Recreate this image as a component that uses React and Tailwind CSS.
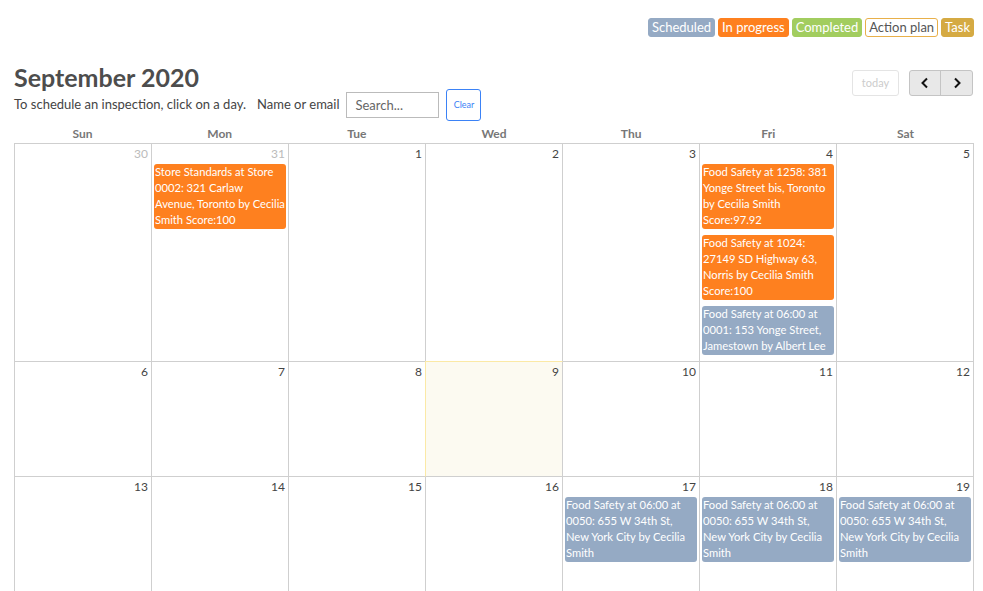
import React from "react"

const legend = [
  { label: "Scheduled", cls: "bg-[#95aac4] text-white border-[#95aac4]" },
  { label: "In progress", cls: "bg-[#fe801f] text-white border-[#fe801f]" },
  { label: "Completed", cls: "bg-[#a2cd5f] text-white border-[#a2cd5f]" },
  { label: "Action plan", cls: "bg-white text-[#555] border-[#e8b04a]" },
  { label: "Task", cls: "bg-[#d5aa43] text-white border-[#d5aa43]" },
]

const days = ["Sun", "Mon", "Tue", "Wed", "Thu", "Fri", "Sat"]

const ORANGE = "bg-[#fe801f]"
const BLUE = "bg-[#95aac4]"

const nyc = ["Food Safety at 06:00 at", "0050: 655 W 34th St,", "New York City by Cecilia", "Smith"]

const weeks = [
  {
    h: "h-[218px]",
    cells: [
      { n: 30, other: true },
      { n: 31, other: true, events: [{ c: ORANGE, t: ["Store Standards at Store", "0002: 321 Carlaw", "Avenue, Toronto by Cecilia", "Smith Score:100"] }] },
      { n: 1 },
      { n: 2 },
      { n: 3 },
      {
        n: 4,
        events: [
          { c: ORANGE, t: ["Food Safety at 1258: 381", "Yonge Street bis, Toronto", "by Cecilia Smith", "Score:97.92"] },
          { c: ORANGE, t: ["Food Safety at 1024:", "27149 SD Highway 63,", "Norris by Cecilia Smith", "Score:100"] },
          { c: BLUE, t: ["Food Safety at 06:00 at", "0001: 153 Yonge Street,", "Jamestown by Albert Lee"] },
        ],
      },
      { n: 5 },
    ],
  },
  {
    h: "h-[115px]",
    cells: [{ n: 6 }, { n: 7 }, { n: 8 }, { n: 9, today: true }, { n: 10 }, { n: 11 }, { n: 12 }],
  },
  {
    h: "h-[130px]",
    cells: [
      { n: 13 },
      { n: 14 },
      { n: 15 },
      { n: 16 },
      { n: 17, events: [{ c: BLUE, t: nyc }] },
      { n: 18, events: [{ c: BLUE, t: nyc }] },
      { n: 19, events: [{ c: BLUE, t: nyc }] },
    ],
  },
]

const App = () => {
  return (
    <div className="w-[983px] h-[591px] overflow-hidden bg-white font-['Lato','Noto_Sans',sans-serif] text-[#444]">
      {/* Legend */}
      <div className="flex justify-end gap-[3px] pt-[18px] pr-[9px]">
        {legend.map((l) => (
          <span key={l.label} className={`border rounded-[3px] px-[3px] h-[19px] leading-[17px] text-[13px] ${l.cls}`}>
            {l.label}
          </span>
        ))}
      </div>

      {/* Header */}
      <div className="flex justify-between items-start pl-[14px] pr-[10px] mt-[26px]">
        <div>
          <h1 className="text-[25px] font-bold text-[#4d4d4d] leading-[28px]">September 2020</h1>
          <div className="flex items-center text-[13px] text-[#444] mt-[-2px]">
            <span>To schedule an inspection, click on a day.</span>
            <span className="ml-[11px]">Name or email</span>
            <input
              placeholder="Search..."
              className="ml-[7px] w-[93px] h-[26px] border border-[#bbb] px-[8px] text-[13px] placeholder:text-[#666] outline-none"
            />
            <button className="ml-[7px] w-[35px] h-[32px] border border-[#3b82f6] rounded-[3px] text-[9px] text-[#3b82f6]">
              Clear
            </button>
          </div>
        </div>
        <div className="flex items-center mt-[7px]">
          <button className="w-[47px] h-[26px] border border-[#e4e4e4] rounded-[3px] text-[11px] text-[#ccc] bg-white">today</button>
          <div className="flex ml-[10px] border border-[#c4c4c4] rounded-[3px] overflow-hidden bg-[#e8e8e8]">
            <button className="w-[31px] h-[24px] flex items-center justify-center border-r border-[#c4c4c4]">
              <svg width="10" height="12" viewBox="0 0 10 12"><path d="M7 1.5 L2.5 6 L7 10.5" stroke="#111" strokeWidth="2" fill="none" /></svg>
            </button>
            <button className="w-[31px] h-[24px] flex items-center justify-center">
              <svg width="10" height="12" viewBox="0 0 10 12"><path d="M3 1.5 L7.5 6 L3 10.5" stroke="#111" strokeWidth="2" fill="none" /></svg>
            </button>
          </div>
        </div>
      </div>

      {/* Calendar */}
      <div className="ml-[14px] w-[960px] mt-[3px]">
        <div className="grid grid-cols-7 h-[19px]">
          {days.map((d) => (
            <div key={d} className="text-center text-[12px] font-bold text-[#777] leading-[19px]">{d}</div>
          ))}
        </div>
        <div className="border-l border-t border-[#cfcfcf]">
          {weeks.map((w, i) => (
            <div key={i} className={`grid grid-cols-7 ${w.h}`}>
              {w.cells.map((c) => (
                <div
                  key={c.n}
                  className={`border-r border-b border-[#cfcfcf] ${c.today ? "bg-[#fcfaf1] border-t border-t-[#fbe9a6] border-l border-l-[#fbe9a6] -mt-px -ml-px" : ""}`}
                >
                  <div className={`text-right pr-[3px] text-[12px] leading-[17px] pt-[1px] ${c.other ? "text-[#bbb]" : "text-[#444]"}`}>
                    {c.n}
                  </div>
                  <div className="flex flex-col gap-[6px] px-[2px] mt-[2px]">
                    {(c.events || []).map((e, k) => (
                      <div key={k} className={`${e.c} text-white text-[11.2px] leading-[16px] rounded-[3px] px-[1px] pb-[1px] overflow-hidden`}>
                        {e.t.map((line, j) => (
                          <div key={j} className="whitespace-nowrap">{line}</div>
                        ))}
                      </div>
                    ))}
                  </div>
                </div>
              ))}
            </div>
          ))}
        </div>
      </div>
    </div>
  )
}

export default App
